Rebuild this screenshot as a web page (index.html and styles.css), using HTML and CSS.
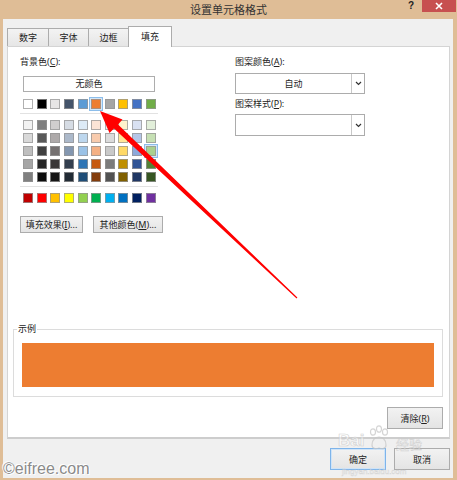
FILE: index.html
```html
<!DOCTYPE html>
<html lang="zh-CN">
<head>
<meta charset="utf-8">
<title>设置单元格格式</title>
<link rel="stylesheet" href="styles.css">
</head>
<body>
<div class="window">
  <div class="titlebar">
    <div class="title">设置单元格格式</div>
    <div class="controls">
      <span class="help">?</span>
      <span class="close"><svg width="8" height="8" viewBox="0 0 8 8"><path d="M1 1L7 7M7 1L1 7" stroke="#fff" stroke-width="1.6"/></svg></span>
    </div>
  </div>
  <div class="client">
    <div class="tabs">
      <div class="tab t1">数字</div>
      <div class="tab t2">字体</div>
      <div class="tab t3">边框</div>
      <div class="tab t4 active">填充</div>
    </div>
    <div class="panel">
      <div class="top">
        <div class="leftcol">
          <div class="label">背景色(<u>C</u>):</div>
          <div class="nocolor">无颜色</div>
          <div class="swrow theme">
            <span class="sw" style="background:#ffffff"></span>
            <span class="sw" style="background:#000000"></span>
            <span class="sw" style="background:#e7e6e6"></span>
            <span class="sw" style="background:#44546a"></span>
            <span class="sw" style="background:#5b9bd5"></span>
            <span class="sw sel" style="background:#ed7d31"></span>
            <span class="sw" style="background:#a5a5a5"></span>
            <span class="sw" style="background:#ffc000"></span>
            <span class="sw" style="background:#4472c4"></span>
            <span class="sw" style="background:#70ad47"></span>
          </div>
          <div class="sep"></div>
          <div class="swgrid">
            <span class="sw" style="background:#f2f2f2"></span>
            <span class="sw" style="background:#7f7f7f"></span>
            <span class="sw" style="background:#d0cece"></span>
            <span class="sw" style="background:#d6dce4"></span>
            <span class="sw" style="background:#ddebf7"></span>
            <span class="sw" style="background:#fce4d6"></span>
            <span class="sw" style="background:#ededed"></span>
            <span class="sw" style="background:#fff2cc"></span>
            <span class="sw" style="background:#d9e1f2"></span>
            <span class="sw" style="background:#e2efda"></span>

            <span class="sw" style="background:#d9d9d9"></span>
            <span class="sw" style="background:#595959"></span>
            <span class="sw" style="background:#aeaaaa"></span>
            <span class="sw" style="background:#acb9ca"></span>
            <span class="sw" style="background:#bdd7ee"></span>
            <span class="sw" style="background:#f8cbad"></span>
            <span class="sw" style="background:#dbdbdb"></span>
            <span class="sw" style="background:#ffe699"></span>
            <span class="sw" style="background:#b4c6e7"></span>
            <span class="sw" style="background:#c6e0b4"></span>

            <span class="sw" style="background:#bfbfbf"></span>
            <span class="sw" style="background:#404040"></span>
            <span class="sw" style="background:#757171"></span>
            <span class="sw" style="background:#8497b0"></span>
            <span class="sw" style="background:#9bc2e6"></span>
            <span class="sw" style="background:#f4b084"></span>
            <span class="sw" style="background:#c9c9c9"></span>
            <span class="sw" style="background:#ffd966"></span>
            <span class="sw" style="background:#8ea9db"></span>
            <span class="sw hov" style="background:#a9d08e"></span>

            <span class="sw" style="background:#a6a6a6"></span>
            <span class="sw" style="background:#262626"></span>
            <span class="sw" style="background:#3a3838"></span>
            <span class="sw" style="background:#333f4f"></span>
            <span class="sw" style="background:#2f75b5"></span>
            <span class="sw" style="background:#c65911"></span>
            <span class="sw" style="background:#7b7b7b"></span>
            <span class="sw" style="background:#bf8f00"></span>
            <span class="sw" style="background:#305496"></span>
            <span class="sw" style="background:#548235"></span>

            <span class="sw" style="background:#808080"></span>
            <span class="sw" style="background:#0d0d0d"></span>
            <span class="sw" style="background:#161616"></span>
            <span class="sw" style="background:#222b35"></span>
            <span class="sw" style="background:#1f4e78"></span>
            <span class="sw" style="background:#833c0c"></span>
            <span class="sw" style="background:#525252"></span>
            <span class="sw" style="background:#806000"></span>
            <span class="sw" style="background:#203764"></span>
            <span class="sw" style="background:#375623"></span>
          </div>
          <div class="sep sep2"></div>
          <div class="swrow std">
            <span class="sw" style="background:#c00000"></span>
            <span class="sw" style="background:#ff0000"></span>
            <span class="sw" style="background:#ffc000"></span>
            <span class="sw" style="background:#ffff00"></span>
            <span class="sw" style="background:#92d050"></span>
            <span class="sw" style="background:#00b050"></span>
            <span class="sw" style="background:#00b0f0"></span>
            <span class="sw" style="background:#0070c0"></span>
            <span class="sw" style="background:#002060"></span>
            <span class="sw" style="background:#7030a0"></span>
          </div>
          <div class="btnrow">
            <div class="btn b-fill">填充效果(<u>I</u>)...</div>
            <div class="btn b-more">其他颜色(<u>M</u>)...</div>
          </div>
        </div>
        <div class="rightcol">
          <div class="label">图案颜色(<u>A</u>):</div>
          <div class="select first">
            <div class="val">自动</div>
            <div class="arr"><svg width="7" height="5" viewBox="0 0 7 5"><path d="M1 1L3.5 3.5L6 1" fill="none" stroke="#333" stroke-width="1.2"/></svg></div>
          </div>
          <div class="label lbl2">图案样式(<u>P</u>):</div>
          <div class="select second">
            <div class="val"></div>
            <div class="arr"><svg width="7" height="5" viewBox="0 0 7 5"><path d="M1 1L3.5 3.5L6 1" fill="none" stroke="#333" stroke-width="1.2"/></svg></div>
          </div>
        </div>
      </div>
      <fieldset class="sample">
        <legend>示例</legend>
        <div class="preview"></div>
      </fieldset>
      <div class="clearrow">
        <div class="btn b-clear">清除(<u>R</u>)</div>
      </div>
    </div>
    <div class="footer">
      <div class="btn b-ok default">确定</div>
      <div class="btn b-cancel">取消</div>
    </div>
  </div>
</div>

<div class="baidu">
  <span class="bai">Bai</span>
  <svg class="paw" width="22" height="26" viewBox="0 0 22 26">
    <g fill="none" stroke="#c8c8c8" stroke-width="1.2">
      <ellipse cx="5" cy="7" rx="2.5" ry="3.2"/>
      <ellipse cx="11" cy="4" rx="2.5" ry="3.2"/>
      <ellipse cx="17" cy="7" rx="2.5" ry="3.2"/>
      <path d="M4 20C4 14 8 12 11 12C14 12 18 14 18 20C18 24 14 24 11 23C8 24 4 24 4 20Z"/>
    </g>
  </svg>
  <span class="jy">经验</span>
  <span class="url">jingyan.baidu.com</span>
</div>

<div class="wm">©eifree.com</div>

<svg class="arrow" width="457" height="480" viewBox="0 0 457 480">
  <polygon fill="#ff0000" points="100,111 122.5,119.5 118,124.5 297.4,297.6 296.6,298.4 114,128.4 109.5,133"/>
</svg>
</body>
</html>
```

FILE: styles.css
```css
* { box-sizing: border-box; }
html, body { margin: 0; padding: 0; }
body {
  width: 457px;
  height: 480px;
  background: #dfbd96;
  font-family: "Noto Sans", "Noto Sans CJK SC", sans-serif;
  font-size: 9px;
  color: #1e1e1e;
  position: relative;
  overflow: hidden;
}
u { text-decoration: underline; text-underline-offset: 1px; }

.window { display: flex; flex-direction: column; height: 480px; }

.titlebar {
  height: 19px;
  display: grid;
  grid-template-columns: 1fr auto 1fr;
}
.title {
  grid-column: 2;
  font-family: "Noto Sans CJK SC", sans-serif;
  font-size: 11px;
  line-height: 18px;
  color: #333;
}
.controls {
  grid-column: 3;
  display: flex;
  justify-content: flex-end;
  align-items: flex-start;
  gap: 8px;
  padding-right: 1px;
}
.help {
  font-family: "Liberation Sans", sans-serif;
  font-weight: bold;
  font-size: 10px;
  line-height: 12px;
  color: #222;
}
.close {
  width: 34px;
  height: 12px;
  background: #c75050;
  display: flex;
  align-items: center;
  justify-content: center;
}

.client {
  flex: 1;
  margin: 0 4px 2px 3px;
  background: #f0f0f0;
  padding: 7px 3px 0 4px;
  display: flex;
  flex-direction: column;
}

.tabs {
  display: flex;
  height: 20px;
  align-items: flex-end;
  position: relative;
  z-index: 1;
}
.tab {
  height: 18px;
  border: 1px solid #acacac;
  border-bottom: none;
  background: linear-gradient(#f3f3f3, #e6e6e6);
  margin-right: -1px;
  display: flex;
  align-items: center;
  justify-content: center;
  color: #222;
}
.t1 { width: 42px; }
.t2 { width: 41px; }
.t3 { width: 41px; }
.t4 { width: 44px; }
.tab.active {
  height: 21px;
  background: #fff;
  margin-bottom: -1px;
  padding-bottom: 1px;
}

.panel {
  height: 393px;
  background: #fff;
  border: 1px solid #d4d4d4;
  border-bottom: 2px solid #cdcdcd;
  display: flex;
  flex-direction: column;
}

.top {
  display: grid;
  grid-template-columns: 215px 130px;
  padding: 9px 0 0 12px;
}
.label { line-height: 12px; height: 12px; color: #222; }

.nocolor {
  margin: 8px 0 0 3px;
  width: 132px;
  height: 16px;
  border: 1px solid #adadad;
  background: #fff;
  text-align: center;
  line-height: 14px;
}

.swrow, .swgrid {
  display: grid;
  grid-template-columns: repeat(10, 13.65px);
  margin-left: 3px;
}
.swgrid { row-gap: 3px; margin-top: 6px; }
.theme { margin-top: 7px; }
.std { margin-top: 6px; }
.sw {
  width: 10px;
  height: 10px;
  border: 1px solid rgba(150, 150, 150, 0.75);
}
.sw.sel, .sw.hov {
  box-shadow: 0 0 0 1px #d3e7f9, 0 0 0 2px #8cbdea;
}
.sep {
  width: 138px;
  height: 1px;
  background: #e2e2e2;
  margin-top: 4px;
}
.sep2 { margin-top: 4px; }

.btnrow {
  display: flex;
  gap: 10px;
  margin-top: 13px;
}
.btn {
  border: 1px solid #acacac;
  background: linear-gradient(#f2f2f2, #e4e4e4);
  display: flex;
  align-items: center;
  justify-content: center;
  color: #222;
}
.b-fill { width: 63px; height: 17px; }
.b-more { width: 70px; height: 17px; }

.select {
  width: 130px;
  height: 21px;
  border: 1px solid #acacac;
  background: #fff;
  display: flex;
}
.select.first { margin-top: 5px; }
.select.second { margin-top: 4px; height: 22px; }
.lbl2 { margin-top: 4px; }
.val { flex: 1; text-align: center; line-height: 19px; }
.arr {
  width: 13px;
  border-left: 1px solid #c8c8c8;
  display: flex;
  align-items: center;
  justify-content: center;
}

.sample {
  margin: 90px 6px 0 5px;
  padding: 8px 8px 9px 8px;
  border: 1px solid #dcdcdc;
  min-width: 0;
}
.sample legend {
  padding: 0 1px;
  margin-left: -5px;
  line-height: 12px;
  font-size: 9px;
  color: #222;
}
.preview { height: 44px; background: #ed7d31; }

.clearrow {
  display: flex;
  justify-content: flex-end;
  margin: 10px 6px 0 0;
}
.b-clear { width: 56px; height: 22px; }

.footer {
  display: flex;
  justify-content: flex-end;
  gap: 8px;
  margin-top: 9px;
}
.b-ok, .b-cancel { width: 56px; height: 22px; }
.btn.default {
  border-color: #7eb4ea;
  box-shadow: inset 0 0 0 1px #cfe4f8;
}

.wm {
  position: absolute;
  left: 3px;
  top: 460px;
  font-family: "Liberation Sans", sans-serif;
  font-size: 16px;
  line-height: 18px;
  color: #8a8a8a;
  text-shadow: 0 0 2px #fff, 0 0 1px #fff, 1px 1px 0 #fff, -1px -1px 0 #fff;
}

.baidu {
  position: absolute;
  left: 336px;
  top: 424px;
  width: 110px;
  height: 46px;
  pointer-events: none;
  opacity: 0.75;
}
.bai {
  position: absolute;
  left: 2px;
  top: 7px;
  font-family: "Liberation Sans", sans-serif;
  font-size: 17px;
  font-weight: bold;
  color: rgba(255, 255, 255, 0.7);
  -webkit-text-stroke: 0.6px #c6c6c6;
}
.paw { position: absolute; left: 32px; top: 1px; }
.jy {
  position: absolute;
  left: 60px;
  top: 12px;
  font-family: "Noto Sans CJK SC", sans-serif;
  font-size: 13px;
  line-height: 16px;
  color: rgba(255, 255, 255, 0.7);
  -webkit-text-stroke: 0.5px #c6c6c6;
}
.url {
  position: absolute;
  left: 6px;
  top: 43px;
  font-family: "Liberation Sans", sans-serif;
  font-size: 8px;
  line-height: 9px;
  color: rgba(255, 255, 255, 0.6);
  -webkit-text-stroke: 0.4px #cccccc;
}

.arrow {
  position: absolute;
  left: 0;
  top: 0;
  pointer-events: none;
}
```
